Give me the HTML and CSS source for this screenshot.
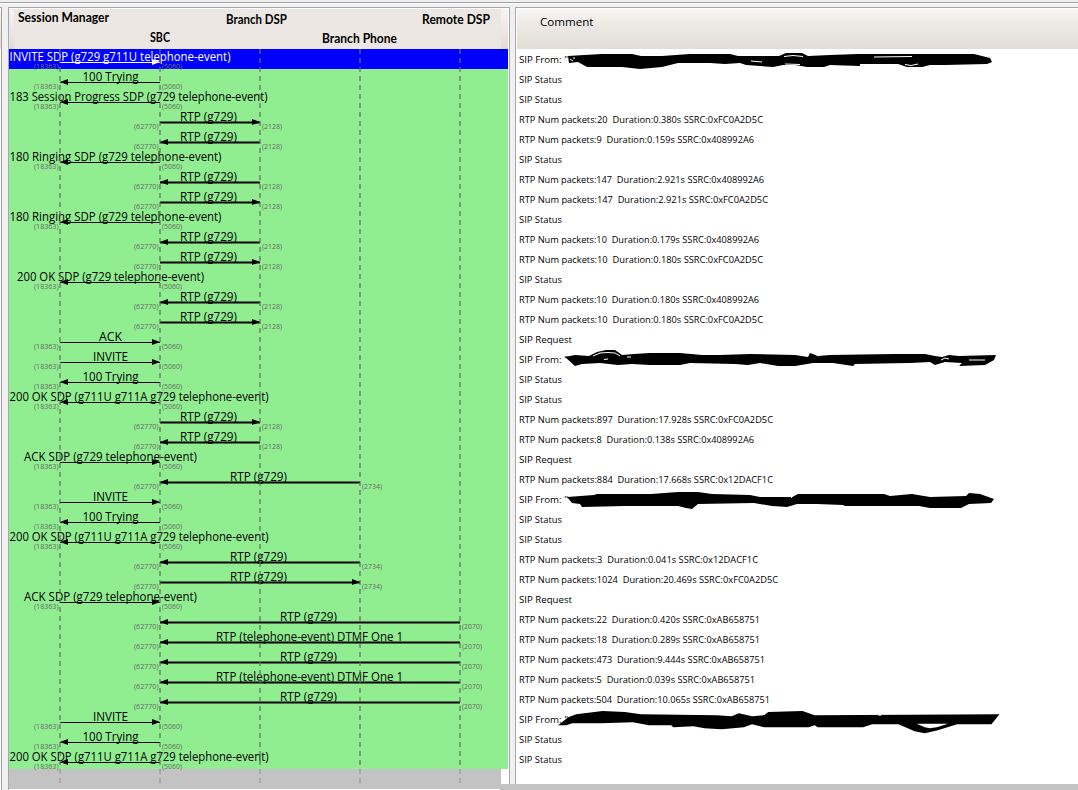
FILE: index.html
```
<!DOCTYPE html>
<html lang="en">
<head>
<meta charset="utf-8">
<title>Call Flow</title>
<link rel="stylesheet" href="styles.css">
</head>
<body>
<div class="toolbar-edge"></div>
<main class="panes">
  <aside class="time-pane"><div class="pane-header"></div></aside>
  <section class="flow-pane">
    <svg class="flow" width="500" height="782" viewBox="9 8 500 782"></svg>
  </section>
  <section class="comment-pane">
    <h2 class="pane-header comment-title">Comment</h2>
    <ol class="comments"></ol>
    <div class="pane-footer"></div>
    <svg class="scribbles" width="562" height="735" viewBox="516 49 562 735">
      <path d="M568 56L584 55L602 54L632 54L641 56L662 56L690 54L730 54L738 56L779 56L786 53L802 53L808 56L830 55L858 54L911 54L974 54L990 58L992 62L987 64L945 65L930 65L922 67L907 67L898 64L860 64L860 66L830 65L824 67L807 67L795 65L783 65L773 67L746 65L740 63L725 64L710 63L678 63L662 67L640 69L622 67L587 67L578 62L569 63Z"/>
      <path class="gap" d="M784 56.5L793 55.5L803 56.5M570 59L573 61M573 58L575 58M905 64.5L911 65.5L918 64M751 61L762 62M874 57L912 56.5M785 64L800 64.5"/>
      <path d="M565 357L575 355L589 356L597 352L606 350L615 350L622 355L634 354L650 353L680 353L702 355L720 355L750 354L795 355L808 357L810 353L818 356L830 355L895 354L925 354L935 356L942 357L949 355L959 356L996 355L994 360L985 365L959 366L962 363L945 362L935 365L930 362L910 363L908 363L855 364L853 366L833 363L813 363L795 366L778 366L760 363L748 365L735 364L690 363L680 365L650 365L632 364L618 365L600 363L582 364L575 366Z"/>
      <path class="gap" d="M593 356L600 353L608 352.5L615 353L620 356M604 359.5L608 359M941 360L945 358L949 359M815 354L819 356M627 357L631 357M969 360L985 360"/>
      <path d="M567 497L594 495L597 494L651 494L678 492L698 492L712 494L750 495L760 497L792 497L798 494L884 494L890 496L912 494L930 497L966 496L969 493L980 494L994 499L991 503L969 504L961 508L930 508L919 506L845 506L843 505L817 504L797 504L787 507L772 506L754 503L698 504L692 509L686 508L678 506L625 506L582 507L580 504L572 503Z"/>
      <path class="gap" d="M791 498L793 496"/>
      <g transform="translate(550 700) scale(1.0101) translate(-550 -700)">
        <path d="M558 725L568 717L576 714L602 711L624 712L640 714L715 715L730 716L737 713L750 716L762 715L766 712L800 711L812 715L995 714L987 724L953 724L934 730L921 733L911 731L895 724L869 724L860 727L815 727L812 725L806 727L762 727L750 724L742 727L720 729L703 728L692 726L672 727L670 725L648 725L632 722L600 723L572 723L566 725Z"/>
        <path class="hole" d="M913 723.5L944 723.5L933 727L926 728L921 727Z"/>
        <path class="gap" d="M875 715L878 715"/>
      </g>
    </svg>
  </section>
</main>
<script src="script.js"></script>
</body>
</html>
```
FILE: styles.css
```
* { box-sizing: border-box; }
body { margin: 0; height: 790px; overflow: hidden; background: #f0f0f0; display: flex; flex-direction: column; font-family: "Open Sans", "Noto Sans", sans-serif; }
.toolbar-edge { height: 7px; flex: none; background: linear-gradient(#f0f0f0 2px, #a0a0a0 2px, #a0a0a0 3px, #fff 3px, #fff 4px, #f0f0f0 4px); }
.panes { display: flex; flex: 1; min-height: 0; }
.time-pane { width: 2px; margin-right: 6px; border-top: 1px solid #a5a8ad; border-right: 1px solid #a0a0a0; background: #fff; }
.pane-header { height: 41px; margin: 0; background: linear-gradient(#fff 1px, #f7f4f2 2px, #ebe8e3 20px, #e3dcd6); }
.flow-pane { width: 502px; margin-right: 5px; border: 1px solid #a5a8ad; border-bottom: 0; background: #fff; }
.flow { display: block; }
.comment-pane { position: relative; flex: 1; border: 1px solid #a5a8ad; border-width: 1px 0 0 1px; padding-left: 1px; background: #fff; display: flex; flex-direction: column; }
.comment-title { padding: 4px 0 0 23px; font-size: 11.6px; line-height: 19px; font-weight: 400; color: #000; }
.comments { list-style: none; margin: 0; padding: 1px 0 0 2px; flex: 1; }
.comments li { height: 20px; line-height: 20px; font-size: 9px; color: #000; }
.comments svg { display: block; overflow: visible; }
.comment { white-space: pre; }
.pane-footer { height: 6px; margin-left: -17px; background: #c3c3c3; position: relative; }
.scribbles { position: absolute; left: 0; top: 41px; }
.gap { fill: none; stroke: #fff; }
.hole { fill: #fff; }
.node { font: 700 12.5px Lato, sans-serif; }
.label { font: 12px "Open Sans", sans-serif; }
.port { font: 7.5px "Open Sans", sans-serif; fill: #696969; }
.life { stroke: #696969; stroke-opacity: .6; stroke-width: 2; stroke-dasharray: 5 4; }
.halo { stroke: #000; stroke-opacity: .5; stroke-width: 3; }
```
FILE: script.js
```
const NS = 'http://www.w3.org/2000/svg';
const flow = document.querySelector('.flow');
const comments = document.querySelector('.comments');

function el(parent, name, attrs, text) {
  const node = document.createElementNS(NS, name);
  for (const key in attrs) node.setAttribute(key, attrs[key]);
  if (text !== undefined) node.textContent = text;
  parent.appendChild(node);
  return node;
}

function fitted(parent, cls, x, y, width, text, extra) {
  el(parent, 'text', Object.assign({ class: cls, x: x, y: y, textLength: width, lengthAdjust: 'spacingAndGlyphs' }, extra), text);
}

/* Drawn width of each arrow label */
const labelWidths = {
  'INVITE SDP (g729 g711U telephone-event)': 221,
  '100 Trying': 56,
  '183 Session Progress SDP (g729 telephone-event)': 258,
  'RTP (g729)': 57,
  '180 Ringing SDP (g729 telephone-event)': 212,
  '200 OK SDP (g729 telephone-event)': 187,
  'ACK': 23,
  'INVITE': 35,
  '200 OK SDP (g711U g711A g729 telephone-event)': 259,
  'ACK SDP (g729 telephone-event)': 173,
  'RTP (telephone-event) DTMF One 1': 187
};

const S = 'SIP Status', Q = 'SIP Request', F = 'SIP From: "';
const trying = [160, 60, '100 Trying', S];
const okAll = [160, 60, '200 OK SDP (g711U g711A g729 telephone-event)', S];
const ringing = [160, 60, '180 Ringing SDP (g729 telephone-event)', S];
const ackSdp = [60, 160, 'ACK SDP (g729 telephone-event)', Q];
const invite = [60, 160, 'INVITE', F];
const dtmf = 'RTP (telephone-event) DTMF One 1';
/* endX is the right edge of the comment text */
function rtp(from, to, count, duration, ssrc, endX, label) {
  return [from, to, label || 'RTP (g729)', 'RTP Num packets:' + count + '\u00a0 Duration:' + duration + 's SSRC:' + ssrc, endX];
}
const A = '0x408992A6', B = '0xFC0A2D5C', C = '0x12DACF1C', D = '0xAB658751';
const rows = [
  [60, 160, 'INVITE SDP (g729 g711U telephone-event)', F],
  trying,
  [160, 60, '183 Session Progress SDP (g729 telephone-event)', S],
  rtp(160, 260, 20, '0.380', B, 763),
  rtp(260, 160, 9, '0.159', A, 754),
  ringing,
  rtp(260, 160, 147, '2.921', A, 764),
  rtp(160, 260, 147, '2.921', B, 768),
  ringing,
  rtp(260, 160, 10, '0.179', A, 759),
  rtp(160, 260, 10, '0.180', B, 763),
  [160, 60, '200 OK SDP (g729 telephone-event)', S],
  rtp(260, 160, 10, '0.180', A, 759),
  rtp(160, 260, 10, '0.180', B, 763),
  [60, 160, 'ACK', Q],
  invite, trying, okAll,
  rtp(160, 260, 897, '17.928', B, 773),
  rtp(260, 160, 8, '0.138', A, 754),
  ackSdp,
  rtp(360, 160, 884, '17.668', C, 773),
  invite, trying, okAll,
  rtp(360, 160, 3, '0.041', C, 758),
  rtp(160, 360, 1024, '20.469', B, 778),
  ackSdp,
  rtp(460, 160, 22, '0.420', D, 760),
  rtp(460, 160, 18, '0.289', D, 760, dtmf),
  rtp(460, 160, 473, '9.444', D, 765),
  rtp(460, 160, 5, '0.039', D, 755, dtmf),
  rtp(460, 160, 504, '10.065', D, 770),
  invite, trying, okAll
];
const ports = { 60: '(18363)', 260: '(2128)', 360: '(2734)', 460: '(2070)' };

const rect = (x, y, width, height, fill) => el(flow, 'rect', { x, y, width, height, fill });
rect(9, 9, 492, 40, '#ece7e3');
const defs = el(flow, 'defs', {});
const grad = el(defs, 'linearGradient', { id: 'head', x1: 0, y1: 0, x2: 0, y2: 1 });
el(grad, 'stop', { offset: 0, 'stop-color': '#f7f4f2' });
el(grad, 'stop', { offset: 1, 'stop-color': '#e3dcd6' });
rect(501, 9, 7, 40, 'url(#head)');
rect(10, 10, 4, 39, 'url(#head)');
rect(9, 49, 499, 20, '#0000ff');
rect(9, 69, 499, 700, '#90ee90');
rect(9, 769, 492, 20, '#c3c3c3');
rect(501, 784, 8, 6, '#c3c3c3');

[['Session Manager', 18, 22, 91], ['SBC', 150, 42, 20], ['Branch DSP', 226, 24, 61],
 ['Branch Phone', 322, 43, 75], ['Remote DSP', 422, 24, 68]]
  .forEach(([text, x, y, w]) => fitted(flow, 'node', x, y, w, text));

rows.forEach(([from, to, label, comment, endX], i) => {
  const y = 49 + i * 20;
  const ink = i === 0 ? '#fff' : '#000';
  const media = label.startsWith('RTP');
  const lo = Math.min(from, to), hi = Math.max(from, to);
  const width = labelWidths[label];
  const shift = label === dtmf ? -0.5 : media ? -1.5 : 0.5;
  const left = Math.max(9.5, (lo + hi) / 2 - width / 2 + shift);
  fitted(flow, 'label', left, y + 12.3, width, label, { fill: ink });
  if (media) {
    el(flow, 'line', { class: 'halo', x1: lo, y1: y + 13.5, x2: hi, y2: y + 13.5 });
  }
  el(flow, 'line', { x1: lo, y1: y + 13.5, x2: hi, y2: y + 13.5, stroke: ink, 'stroke-width': 1 });
  const back = to > from ? to - 8 : to + 8;
  el(flow, 'path', { d: `M${to} ${y + 13}L${back} ${y + 10}V${y + 16}Z`, fill: ink });
  fitted(flow, 'port', lo - 26, y + 20, 24.5, lo === 60 ? ports[60] : '(62770)');
  fitted(flow, 'port', hi + 2, y + 20, 20, hi === 160 ? '(5060)' : ports[hi]);

  const item = document.createElement('li');
  const line = el(item, 'svg', { width: 300, height: 20 });
  const full = endX ? endX - 519 : comment === S ? 43 : comment === Q ? 53 : 49;
  fitted(line, 'comment', 0, 13, full, comment);
  comments.appendChild(item);
});

[60, 160, 260, 360, 460].forEach(x => el(flow, 'line', { class: 'life', x1: x, y1: 49, x2: x, y2: 769 }));
[60, 160, 260, 360, 460].forEach(x => el(flow, 'line', { class: 'life', x1: x, y1: 769, x2: x, y2: 783, 'style': 'stroke-opacity:.3' }));
```
